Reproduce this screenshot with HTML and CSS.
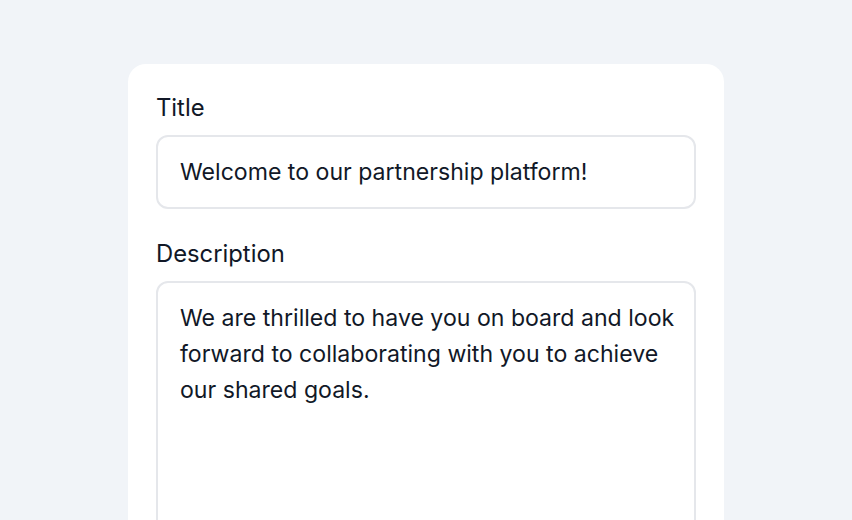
FILE: index.html
```html
<!DOCTYPE html>
<html lang="en">
<head>
<meta charset="utf-8">
<title>Form</title>
<link rel="stylesheet" href="styles.css">
</head>
<body>
<main class="page">
  <form class="card">
    <div class="field">
      <label class="label" for="title">Title</label>
      <input class="input" id="title" type="text" value="Welcome to our partnership platform!">
    </div>
    <div class="field">
      <label class="label" for="desc">Description</label>
      <textarea class="input textarea" id="desc">We are thrilled to have you on board and look forward to collaborating with you to achieve our shared goals.</textarea>
    </div>
  </form>
</main>
</body>
</html>
```
FILE: styles.css
```css
* { box-sizing: border-box; }
html, body {
  margin: 0;
  padding: 0;
  background: #f1f4f8;
  font-family: Inter, "Noto Sans", sans-serif;
  color: #111827;
  overflow: hidden;
}
.page {
  display: flex;
  justify-content: center;
  padding-top: 64px;
  height: 520px;
  overflow: hidden;
}
.card {
  width: 596px;
  height: 600px;
  flex-shrink: 0;
  background: #ffffff;
  border-radius: 18px;
  padding: 29px 28px;
  display: flex;
  flex-direction: column;
  gap: 30px;
}
.field {
  display: flex;
  flex-direction: column;
}
.label {
  font-size: 23.8px;
  line-height: 30px;
  font-weight: 400;
  margin-bottom: 12px;
  color: #111827;
}
.input {
  width: 100%;
  font-family: inherit;
  font-size: 23.1px;
  line-height: 36px;
  color: #111827;
  padding: 17px 22px;
  border: 2px solid #e5e7eb;
  border-radius: 12px;
  background: #fff;
  outline: none;
  margin: 0;
}
.textarea {
  height: 300px;
  padding-right: 14px;
  resize: none;
  overflow: hidden;
  display: block;
}
```
